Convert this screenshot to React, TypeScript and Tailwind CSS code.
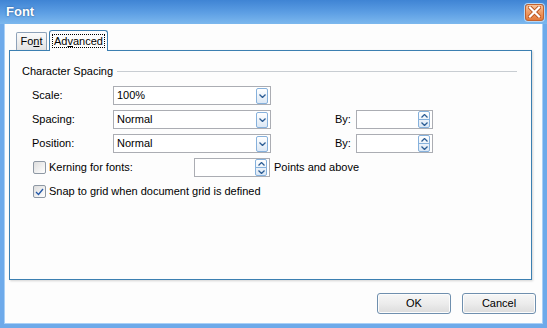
import React from "react";

function Chevron({ up = false }: { up?: boolean }) {
  return (
    <svg width="7" height="4" viewBox="0 0 7 4" className="block">
      <path
        d={up ? "M0.5 3.5 L3.5 0.5 L6.5 3.5" : "M0.5 0.5 L3.5 3.5 L6.5 0.5"}
        stroke="#2c5d94"
        strokeWidth="1.3"
        fill="none"
      />
    </svg>
  );
}

function DropBtn() {
  return (
    <div className="w-[12px] h-[16px] rounded-[2px] border border-[#86b1dc] bg-linear-to-b from-[#ffffff] to-[#dce8f5] flex items-center justify-center">
      <Chevron />
    </div>
  );
}

function SpinBtn() {
  return (
    <div className="w-[12px] h-[17px] rounded-[2px] border border-[#86b1dc] bg-linear-to-b from-[#ffffff] to-[#dce8f5] flex flex-col">
      <div className="flex-1 flex items-center justify-center border-b border-[#86b1dc]">
        <Chevron up />
      </div>
      <div className="flex-1 flex items-center justify-center">
        <Chevron />
      </div>
    </div>
  );
}

function Select({ value, w }: { value: string; w: string }) {
  return (
    <div className={`${w} h-[19px] border border-[#abadb3] bg-white flex items-center justify-between pl-[3px] pr-[2px]`}>
      <span>{value}</span>
      <DropBtn />
    </div>
  );
}

function Spin({ w }: { w: string }) {
  return (
    <div className={`${w} h-[19px] border border-[#abadb3] bg-white flex items-center justify-end pr-[2px]`}>
      <SpinBtn />
    </div>
  );
}

function Check({ checked }: { checked?: boolean }) {
  return (
    <div className="w-[13px] h-[13px] rounded-[2px] border border-[#8e98a4] bg-linear-to-br from-[#dedede] to-[#ffffff] flex items-center justify-center">
      {checked && (
        <svg width="9" height="8" viewBox="0 0 9 8" className="block">
          <path d="M1 4 L3.5 6.5 L8 1" stroke="#2358a8" strokeWidth="1.3" fill="none" />
        </svg>
      )}
    </div>
  );
}

function Button({ label }: { label: string }) {
  return (
    <div className="w-[74px] h-[21px] rounded-[3px] border border-[#6f8fae] bg-linear-to-b from-[#f7f7f7] via-[#ececec] to-[#dcdcdc] flex items-center justify-center shadow-[inset_0_0_0_1px_#fcfcfc]">
      {label}
    </div>
  );
}

export default function App() {
  return (
    <div className="w-[547px] h-[328px] flex flex-col font-['Liberation_Sans',Arial,sans-serif] text-[11px] text-black bg-[#5b9be0] overflow-hidden">
      {/* Title bar */}
      <div className="h-[24px] flex items-center justify-between pl-[6px] pr-[3px] bg-linear-to-b from-[#3f84d4] via-[#5b9de3] to-[#7cb8ee]">
        <span className="text-white font-bold text-[13px] [text-shadow:0_0_2px_#1d4f8a]">Font</span>
        <div className="w-[19px] h-[17px] rounded-[3px] border border-[#c3622f] bg-linear-to-b from-[#f8c49b] via-[#ef9a63] to-[#e27a3c] flex items-center justify-center shadow-[0_0_0_1px_#b7d6f4]">
          <svg width="13" height="12" viewBox="0 0 13 12" className="block">
            <path d="M2 1.5 L11 10.5 M11 1.5 L2 10.5" stroke="#b9541f" strokeWidth="4" strokeLinecap="square" fill="none" />
            <path d="M2 1.5 L11 10.5 M11 1.5 L2 10.5" stroke="#ffffff" strokeWidth="2.2" strokeLinecap="square" fill="none" />
          </svg>
        </div>
      </div>

      {/* Body */}
      <div className="flex-1 flex flex-col bg-[#fdfdfd] border-l-4 border-r-4 border-b-4 border-[#6eaaea] shadow-[inset_1px_0_0_#a9d0f6,inset_-1px_0_0_#a9d0f6,inset_0_-1px_0_#a9d0f6]">
        {/* Tabs */}
        <div className="pt-[6px] pl-[12px]">
          <div className="h-[20px] flex items-end gap-[2px]">
            <div className="w-[31px] h-[18px] border border-b-0 border-[#8ea2b9] rounded-t-[2px] bg-linear-to-b from-[#fbfbfb] to-[#e3e3e3] flex items-center justify-center">
              <span>
                Fo<span className="underline">n</span>t
              </span>
            </div>
            <div className="relative z-10 -mb-px w-[59px] h-[21px] border border-b-0 border-[#3c7fb1] rounded-t-[3px] bg-[#fdfdfd] flex items-center justify-center">
              <span className="border border-dotted border-black px-px leading-[12px]">
                Ad<span className="underline">v</span>anced
              </span>
            </div>
          </div>
        </div>

        {/* Panel */}
        <div className="ml-[5px] mr-[11px] h-[230px] border border-[#3c7fb1] bg-[#fdfdfd] shadow-[1px_1px_2px_#d4d4d4] flex flex-col">
          <div className="pt-[14px] pl-[12px] pr-[14px] h-[27px] flex items-center gap-[4px]">
            <span className="leading-[13px]">Character Spacing</span>
            <div className="flex-1 h-px bg-[#c8cdd2]" />
          </div>

          <div className="mt-[8px] flex flex-col gap-[5px]">
            <div className="h-[19px] flex items-center pl-[22px]">
              <span className="w-[81px]">Scale:</span>
              <Select value="100%" w="w-[158px]" />
            </div>
            <div className="h-[19px] flex items-center pl-[22px]">
              <span className="w-[81px]">Spacing:</span>
              <Select value="Normal" w="w-[158px]" />
              <span className="w-[64px]" />
              <span className="w-[21px]">By:</span>
              <Spin w="w-[77px]" />
            </div>
            <div className="h-[19px] flex items-center pl-[22px]">
              <span className="w-[81px]">Position:</span>
              <Select value="Normal" w="w-[158px]" />
              <span className="w-[64px]" />
              <span className="w-[21px]">By:</span>
              <Spin w="w-[77px]" />
            </div>
            <div className="h-[19px] flex items-center pl-[23px]">
              <Check />
              <span className="ml-[3px] w-[145px]">Kerning for fonts:</span>
              <Spin w="w-[76px]" />
              <span className="ml-[4px]">Points and above</span>
            </div>
            <div className="h-[19px] flex items-center pl-[23px]">
              <Check checked />
              <span className="ml-[3px]">Snap to grid when document grid is defined</span>
            </div>
          </div>
        </div>

        {/* Buttons */}
        <div className="mt-[13px] pr-[7px] flex justify-end gap-[11px]">
          <Button label="OK" />
          <Button label="Cancel" />
        </div>
      </div>
    </div>
  );
}
